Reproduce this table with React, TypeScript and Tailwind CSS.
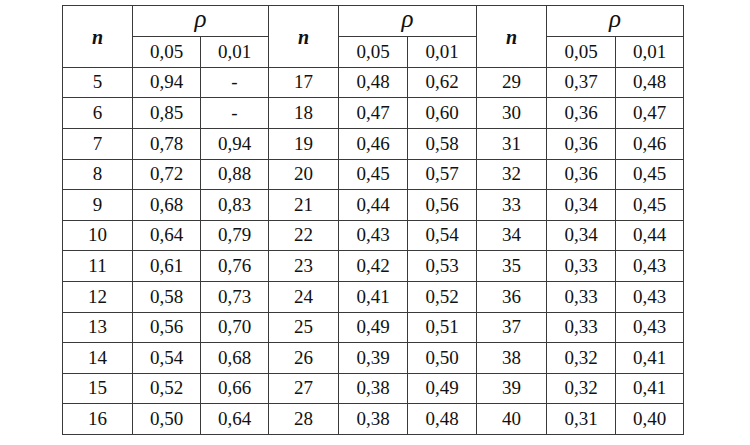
import React from "react";

const groups = [
  {
    start: 5,
    p05: ["0,94", "0,85", "0,78", "0,72", "0,68", "0,64", "0,61", "0,58", "0,56", "0,54", "0,52", "0,50"],
    p01: ["-", "-", "0,94", "0,88", "0,83", "0,79", "0,76", "0,73", "0,70", "0,68", "0,66", "0,64"],
  },
  {
    start: 17,
    p05: ["0,48", "0,47", "0,46", "0,45", "0,44", "0,43", "0,42", "0,41", "0,49", "0,39", "0,38", "0,38"],
    p01: ["0,62", "0,60", "0,58", "0,57", "0,56", "0,54", "0,53", "0,52", "0,51", "0,50", "0,49", "0,48"],
  },
  {
    start: 29,
    p05: ["0,37", "0,36", "0,36", "0,36", "0,34", "0,34", "0,33", "0,33", "0,33", "0,32", "0,32", "0,31"],
    p01: ["0,48", "0,47", "0,46", "0,45", "0,45", "0,44", "0,43", "0,43", "0,43", "0,41", "0,41", "0,40"],
  },
];

const cell = "bg-white flex items-center justify-center";

const App = () => {
  const rows = Array.from({ length: 12 }, (_, i) => i);

  return (
    <div className="w-[750px] h-[445px] bg-white pt-[5px] pl-[62px] font-['Liberation_Serif',serif] text-[19px] text-[#111]">
      <div className="inline-grid gap-px p-px bg-[#3a3a3a] grid-cols-[69px_67px_67px_69px_68px_68px_69px_68px_67px] grid-rows-[30px_30px_29px_30px_30px_29px_30px_29px_30px_30px_29px_30px_29px_30px]">
        {/* header: n spans two rows, rho spans both p columns */}
        {groups.map((g) => (
          <React.Fragment key={"h" + g.start}>
            <div className={`${cell} row-span-2 italic font-bold text-[20px]`}>n</div>
            <div className={`${cell} col-span-2 italic text-[25px] pb-1`}>ρ</div>
          </React.Fragment>
        ))}
        {groups.map((g) => (
          <React.Fragment key={"s" + g.start}>
            <div className={cell}>0,05</div>
            <div className={cell}>0,01</div>
          </React.Fragment>
        ))}

        {rows.map((i) =>
          groups.map((g) => (
            <React.Fragment key={i + "-" + g.start}>
              <div className={cell}>{g.start + i}</div>
              <div className={cell}>{g.p05[i]}</div>
              <div className={cell}>{g.p01[i]}</div>
            </React.Fragment>
          ))
        )}
      </div>
    </div>
  );
};

export default App;
